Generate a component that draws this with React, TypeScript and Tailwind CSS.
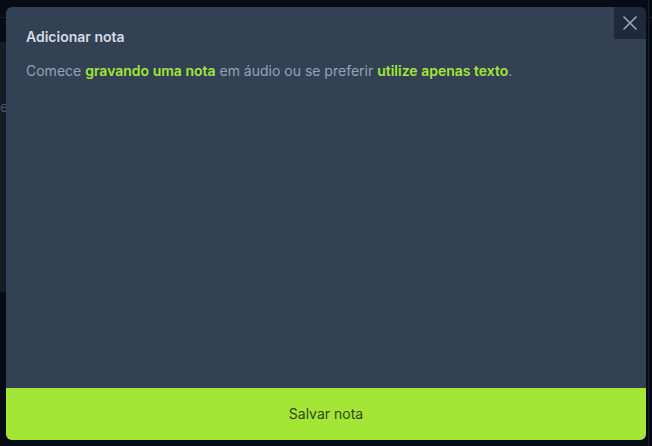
import { X } from 'lucide-react';

const Backdrop = () => (
  <div className="absolute inset-0">
    <div className="h-[18px] border-b border-[#1a202b]" />
    <div className="h-[24px]" />
    <div className="flex h-[250px] w-[12px] items-center bg-[#161b25] pb-[120px]">
      <span className="text-sm text-[#4b5563]">e</span>
    </div>
    <div className="absolute right-[3px] top-0 h-full w-px bg-[#1a202b]" />
  </div>
);

const App = () => {
  return (
    <div
      className="relative h-[446px] w-[652px] overflow-hidden bg-[#070b14]"
      style={{ fontFamily: 'Inter, "Noto Sans", sans-serif' }}
    >
      <Backdrop />

      <div className="absolute left-[6px] top-[7px] flex h-[433px] w-[640px] flex-col overflow-hidden rounded-md bg-[#334155]">
        <button
          aria-label="fechar"
          className="absolute right-0 top-0 flex h-[32px] w-[32px] items-center justify-center bg-[#1e293b] text-[#94a3b8]"
        >
          <X size={24} strokeWidth={1.75} />
        </button>

        <div className="flex-1 px-5 pt-[20px]">
          <h2 className="text-sm font-semibold text-[#d5dbe4]">Adicionar nota</h2>
          <p className="mt-[14px] text-sm text-[#94a3b8]">
            Comece <span className="font-semibold text-[#a3e635]">gravando uma nota</span> em áudio ou se preferir{' '}
            <span className="font-semibold text-[#a3e635]">utilize apenas texto</span>.
          </p>
        </div>

        <button className="h-[52px] w-full bg-[#a3e635] text-sm text-[#34461a]">Salvar nota</button>
      </div>
    </div>
  );
};

export default App;
